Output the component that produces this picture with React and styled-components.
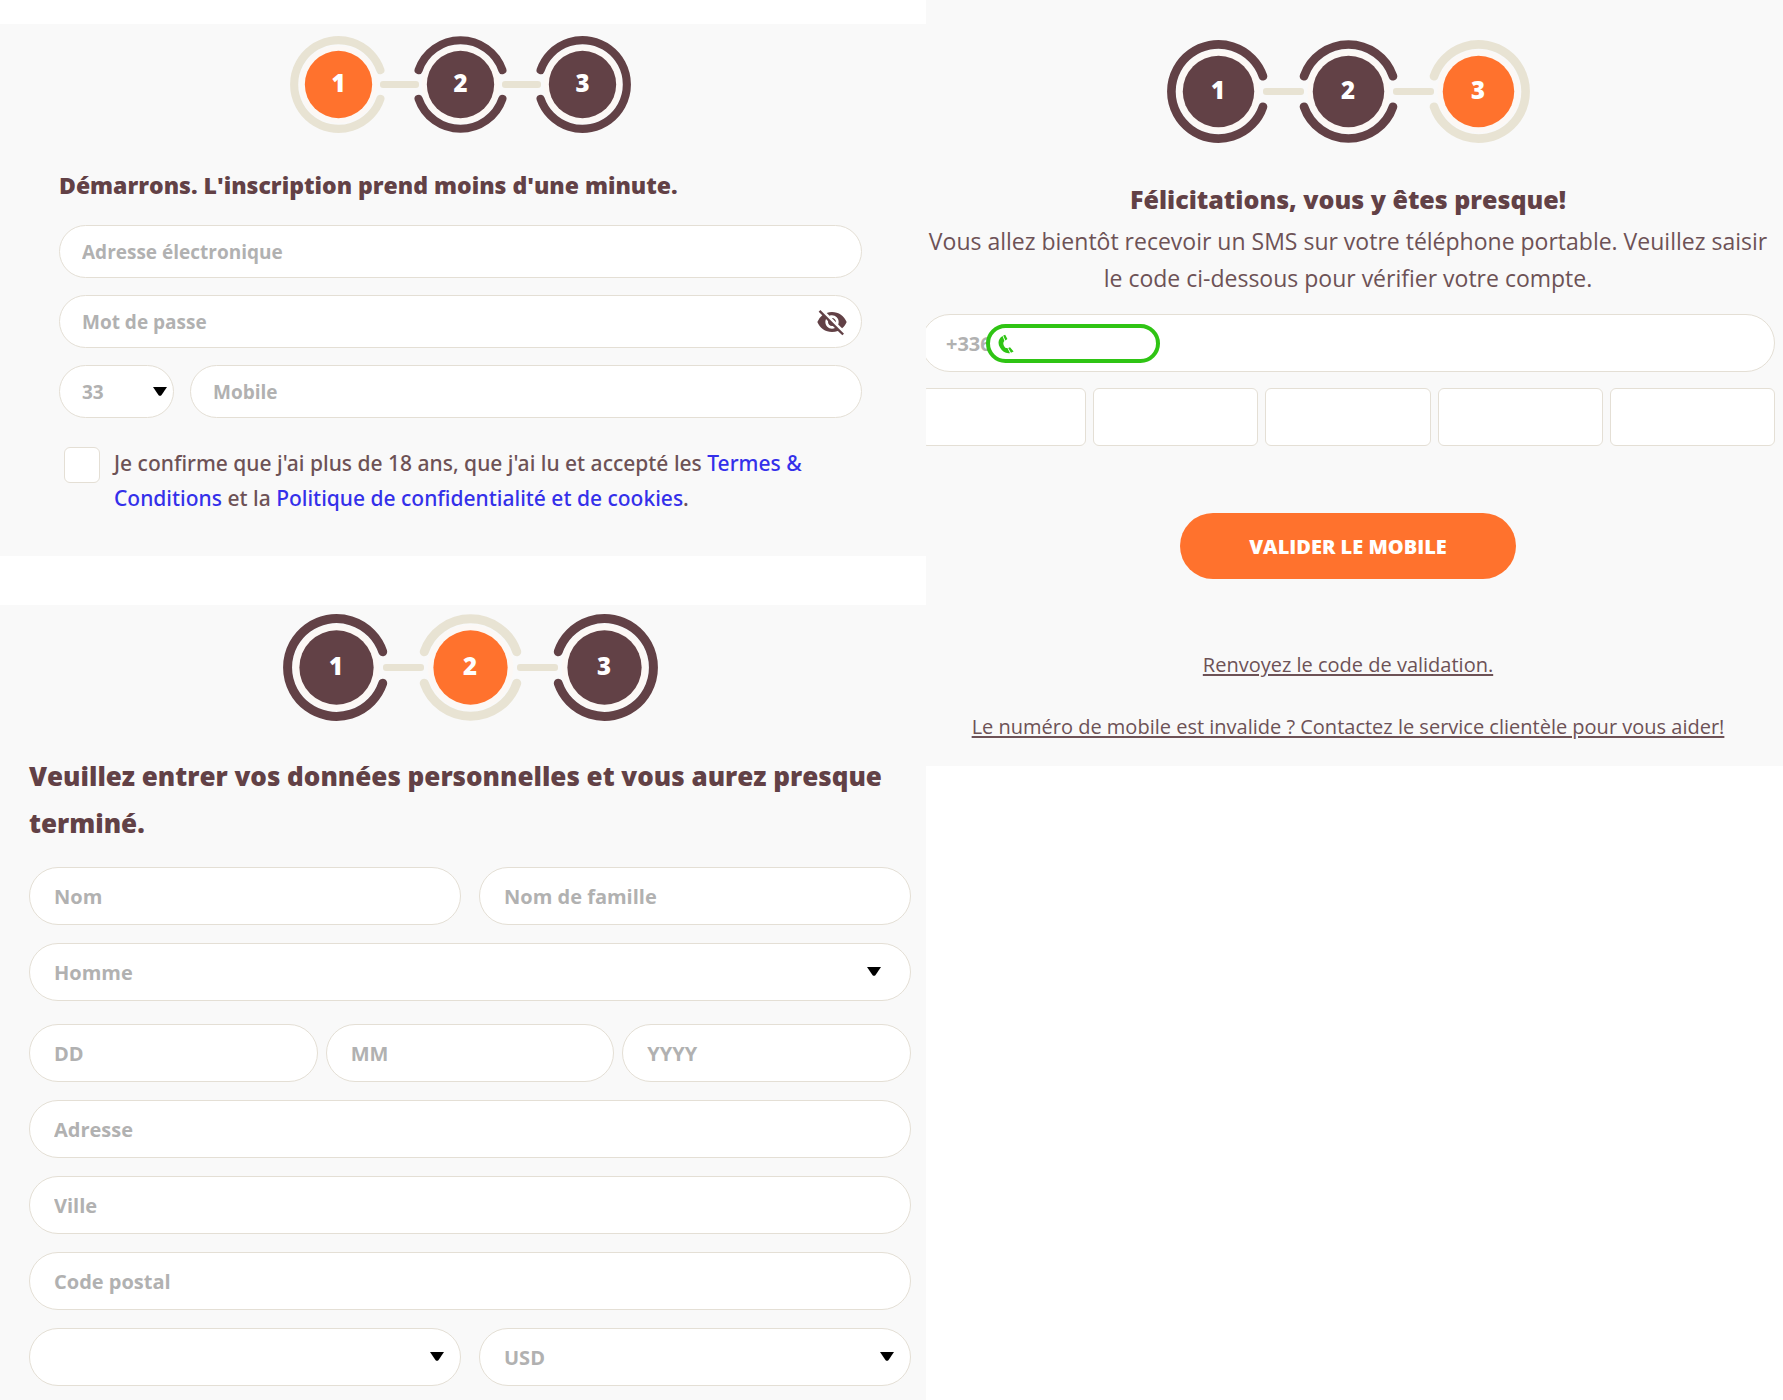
import React, { useState } from 'react';
import styled, { createGlobalStyle, css } from 'styled-components';
import { MdVisibilityOff } from 'react-icons/md';

const brown = '#624146';
const orange = '#ff722d';
const cream = '#e8e3d3';
const line = '#e4dfd5';
const hint = '#b1b1b1';

const GlobalStyle = createGlobalStyle`
  *, *::before, *::after { box-sizing: border-box; }
  body {
    margin: 0;
    background: #ffffff;
    color: ${brown};
    font-family: 'Open Sans', 'Noto Sans', sans-serif;
  }
`;

const Page = styled.main`
  display: grid;
  grid-template-columns: 926fr 857fr;
  align-items: start;
  min-height: 100vh;
`;

const Column = styled.div`
  display: flex;
  flex-direction: column;
  align-self: stretch;
  min-width: 0;
  gap: 49px;
  padding-top: ${(p) => (p.$spaced ? '24px' : '0')};
`;

const Panel = styled.section`
  display: flex;
  flex-direction: column;
  overflow: hidden;
  background: #f9f9f9;
  flex-grow: ${(p) => (p.$grow ? 1 : 0)};
  padding: ${(p) => p.$pad};
`;

const Steps = styled.ol`
  display: flex;
  justify-content: center;
  align-items: center;
  margin: 0 0 32px;
  padding: 0;
  list-style: none;
`;

const Step = styled.li`
  display: grid;
  place-items: center;
  width: ${(p) => p.$size}px;
  height: ${(p) => p.$size}px;

  & > * {
    grid-area: 1 / 1;
  }
`;

const Ring = styled.svg`
  display: block;
  width: 100%;
  height: 100%;
  overflow: visible;
`;

const StepNumber = styled.span`
  color: #ffffff;
  font-size: 24px;
  font-weight: 800;
  line-height: 32px;
  padding-bottom: 4px;
`;

const Connector = styled.li`
  width: ${(p) => p.$length}px;
  height: 7px;
  margin: 0 -7px;
  border-radius: 3px;
  background: ${cream};
`;

const Title = styled.h2`
  margin: 0 0 ${(p) => (p.$tight ? '0' : '20px')};
  font-size: ${(p) => p.$size}px;
  font-weight: 800;
  line-height: ${(p) => p.$line}px;
  text-align: ${(p) => (p.$tight ? 'center' : 'left')};
`;

const Fields = styled.div`
  display: flex;
  flex-direction: column;
  gap: ${(p) => p.$gap}px;
`;

const FieldRow = styled.div`
  display: grid;
  grid-template-columns: ${(p) => p.$cols};
  gap: ${(p) => p.$gap}px;
  padding-top: ${(p) => (p.$offset ? '5px' : '0')};
`;

const FieldBox = styled.div`
  position: relative;
  display: flex;
  width: 100%;
  min-width: 0;
`;

const controlStyle = css`
  width: 100%;
  min-width: 0;
  height: ${(p) => (p.$big ? 58 : 53)}px;
  margin: 0;
  padding: 0 ${(p) => (p.$big ? 24 : 22)}px;
  border: 1px solid ${line};
  border-radius: 29px;
  background: #ffffff;
  color: ${hint};
  font-family: inherit;
  font-size: ${(p) => (p.$big ? 20 : 19)}px;
  font-weight: 700;
  outline-color: ${orange};
  appearance: none;
`;

const Input = styled.input`
  ${controlStyle}

  &::placeholder {
    color: ${hint};
    opacity: 1;
  }
`;

const Select = styled.select`
  ${controlStyle}
  cursor: pointer;
`;

const Caret = styled.svg`
  position: absolute;
  top: 50%;
  right: ${(p) => p.$right}px;
  width: 14px;
  height: 9px;
  margin-top: -5px;
  pointer-events: none;
`;

const EyeButton = styled.button`
  position: absolute;
  top: 50%;
  right: 14px;
  display: flex;
  margin-top: -16px;
  padding: 0;
  border: 0;
  background: none;
  color: ${brown};
  font-size: 32px;
  cursor: pointer;
`;

const Consent = styled.div`
  display: grid;
  grid-template-columns: 36px 1fr;
  gap: 14px;
  margin: 28px 0 0 5px;
`;

const Checkbox = styled.input`
  width: 36px;
  height: 36px;
  margin: 1px 0 0;
  border: 1px solid ${line};
  border-radius: 6px;
  background: #ffffff;
  appearance: none;

  &:checked {
    background: ${orange};
  }
`;

const ConsentText = styled.label`
  color: #6d5256;
  font-family: 'Noto Sans', 'Open Sans', sans-serif;
  font-size: 21px;
  font-weight: 500;
  line-height: 35px;
`;

const TermsLink = styled.a`
  color: #3430ea;
  text-decoration: none;
`;

const Verify = styled.div`
  display: flex;
  flex-direction: column;
  align-items: center;
  margin: 0 8px 0 -5px;
`;

const Lead = styled.p`
  margin: 0 0 17px;
  color: #6d5256;
  font-size: 23px;
  line-height: 37px;
  text-align: center;
`;

const PhoneMask = styled.span`
  position: absolute;
  top: 10px;
  left: 65px;
  display: flex;
  align-items: center;
  width: 174px;
  height: 39px;
  padding-left: 8px;
  border: 4px solid #2fc414;
  border-radius: 20px;
  background: #ffffff;
`;

const Handset = styled.svg`
  width: 16px;
  height: 20px;
`;

const CodeRow = styled.div`
  display: grid;
  grid-template-columns: repeat(5, 1fr);
  gap: 7px;
  width: 100%;
  margin: 16px 0 67px;
`;

const CodeInput = styled.input`
  width: 100%;
  min-width: 0;
  height: 58px;
  padding: 0;
  border: 1px solid ${line};
  border-radius: 6px;
  background: #ffffff;
  color: ${brown};
  font: 700 20px 'Open Sans', sans-serif;
  text-align: center;
`;

const Submit = styled.button`
  height: 66px;
  margin-bottom: 71px;
  padding: 0 69px;
  border: 0;
  border-radius: 33px;
  background: ${orange};
  color: #ffffff;
  font: 800 20px 'Open Sans', sans-serif;
  text-transform: uppercase;
  cursor: pointer;
`;

const Links = styled.div`
  display: flex;
  flex-direction: column;
  align-items: center;
  gap: 32px;
`;

const HelpLink = styled.a`
  color: #6d5256;
  font-size: 20px;
  line-height: 30px;
  text-underline-offset: 2px;
`;

const arcs = {
  top: 'M6.8 35.2 A45.7 45.7 0 0 1 93.2 35.2',
  bottom: 'M6.8 64.8 A45.7 45.7 0 0 0 93.2 64.8',
  openRight: 'M93.2 35.2 A45.7 45.7 0 1 0 93.2 64.8',
  openLeft: 'M6.8 35.2 A45.7 45.7 0 1 1 6.8 64.8',
};

const ringArcs = {
  1: [arcs.openRight],
  2: [arcs.top, arcs.bottom],
  3: [arcs.openLeft],
};

function Stepper({ active, size, link }) {
  return (
    <Steps>
      {[1, 2, 3].map((n) => (
        <React.Fragment key={n}>
          {n > 1 && <Connector aria-hidden="true" $length={link} />}
          <Step $size={size} aria-current={n === active ? 'step' : undefined}>
            <Ring viewBox="0 0 100 100" aria-hidden="true">
              {ringArcs[n].map((d) => (
                <path
                  key={d}
                  d={d}
                  fill="none"
                  stroke={n === active ? cream : brown}
                  strokeWidth="8.4"
                  strokeLinecap="round"
                />
              ))}
              <circle cx="50" cy="50" r="40" fill="#fcf8f5" />
              <circle cx="50" cy="50" r="34.7" fill={n === active ? orange : brown} />
            </Ring>
            <StepNumber>{n}</StepNumber>
          </Step>
        </React.Fragment>
      ))}
    </Steps>
  );
}

function TextField({ label, ...rest }) {
  return (
    <FieldBox>
      <Input aria-label={label} placeholder={label} {...rest} />
    </FieldBox>
  );
}

function SelectField({ label, options, caret, $big }) {
  return (
    <FieldBox>
      <Select aria-label={label} $big={$big}>
        {options.map((o) => (
          <option key={o}>{o}</option>
        ))}
      </Select>
      <Caret $right={caret} viewBox="0 0 14 9" aria-hidden="true">
        <path d="M0 0 H14 L8.4 8.2 Q7 9.4 5.6 8.2 Z" fill="#000" />
      </Caret>
    </FieldBox>
  );
}

function AccountPanel() {
  const [visible, setVisible] = useState(false);
  return (
    <Panel $pad="12px 64px 40px 59px">
      <Stepper active={1} size={97} link={39} />
      <Title $size={23} $line={40}>Démarrons. L'inscription prend moins d'une minute.</Title>
      <Fields $gap={17}>
        <TextField label="Adresse électronique" type="email" />
        <FieldBox>
          <Input
            aria-label="Mot de passe"
            placeholder="Mot de passe"
            type={visible ? 'text' : 'password'}
          />
          <EyeButton
            type="button"
            aria-label="Afficher le mot de passe"
            onClick={() => setVisible(!visible)}
          >
            <MdVisibilityOff />
          </EyeButton>
        </FieldBox>
        <FieldRow $cols="115px 1fr" $gap={16}>
          <SelectField label="Indicatif" options={['33']} caret={7} />
          <TextField label="Mobile" type="tel" />
        </FieldRow>
      </Fields>
      <Consent>
        <Checkbox type="checkbox" id="consent" />
        <ConsentText htmlFor="consent">
          Je confirme que j'ai plus de 18 ans, que j'ai lu et accepté les{' '}
          <TermsLink href="#termes">Termes &amp; Conditions</TermsLink> et la{' '}
          <TermsLink href="#confidentialite">
            Politique de confidentialité et de cookies
          </TermsLink>
          .
        </ConsentText>
      </Consent>
    </Panel>
  );
}

function DetailsPanel() {
  return (
    <Panel $grow $pad="9px 15px 12px 29px">
      <Stepper active={2} size={107} link={41} />
      <Title $size={26} $line={47}>
        Veuillez entrer vos données personnelles et vous aurez presque terminé.
      </Title>
      <Fields $gap={18}>
        <FieldRow $cols="1fr 1fr" $gap={18}>
          <TextField label="Nom" $big />
          <TextField label="Nom de famille" $big />
        </FieldRow>
        <SelectField label="Civilité" options={['Homme', 'Femme']} caret={30} $big />
        <FieldRow $cols="1fr 1fr 1fr" $gap={8} $offset>
          <TextField label="DD" $big />
          <TextField label="MM" $big />
          <TextField label="YYYY" $big />
        </FieldRow>
        <TextField label="Adresse" $big />
        <TextField label="Ville" $big />
        <TextField label="Code postal" $big />
        <FieldRow $cols="1fr 1fr" $gap={18}>
          <SelectField label="Pays" options={['']} caret={17} $big />
          <SelectField label="Devise" options={['USD']} caret={17} $big />
        </FieldRow>
      </Fields>
    </Panel>
  );
}

function VerifyPanel() {
  return (
    <Panel $pad="40px 0 24px">
      <Verify>
        <Stepper active={3} size={103} link={41} />
        <Title $size={25} $line={48} $tight>Félicitations, vous y êtes presque!</Title>
        <Lead>
          Vous allez bientôt recevoir un SMS sur votre téléphone portable. Veuillez saisir le
          code ci-dessous pour vérifier votre compte.
        </Lead>
        <FieldBox>
          <Input aria-label="Numéro de mobile" type="tel" defaultValue="+336" $big />
          <PhoneMask aria-hidden="true">
            <Handset viewBox="0 0 16 20">
              <path
                d="M4.6 2 C0.2 4.4 -0.6 9.4 2 13.6 C4.4 17.8 8 20 12 19.2 L9.4 14 C7.8 14.4 6.6 13.2 5.8 11.4 C5 9.6 5.2 8 6.4 7 Z"
                fill="#2fc414"
              />
              <path
                d="M5.2 1.6 L7.2 0.8 L9.4 5 L7.4 6.4 Z M10.2 14 L12 13.2 L15.6 17.4 L13 18.8 Z"
                fill="#2fc414"
              />
            </Handset>
          </PhoneMask>
        </FieldBox>
        <CodeRow>
          {[1, 2, 3, 4, 5].map((n) => (
            <CodeInput key={n} aria-label={`Chiffre ${n}`} inputMode="numeric" maxLength={1} />
          ))}
        </CodeRow>
        <Submit type="button">Valider le mobile</Submit>
        <Links>
          <HelpLink href="#renvoyer">Renvoyez le code de validation.</HelpLink>
          <HelpLink href="#aide">
            Le numéro de mobile est invalide ? Contactez le service clientèle pour vous aider!
          </HelpLink>
        </Links>
      </Verify>
    </Panel>
  );
}

export default function App() {
  return (
    <>
      <GlobalStyle />
      <Page>
        <Column $spaced>
          <AccountPanel />
          <DetailsPanel />
        </Column>
        <Column>
          <VerifyPanel />
        </Column>
      </Page>
    </>
  );
}
